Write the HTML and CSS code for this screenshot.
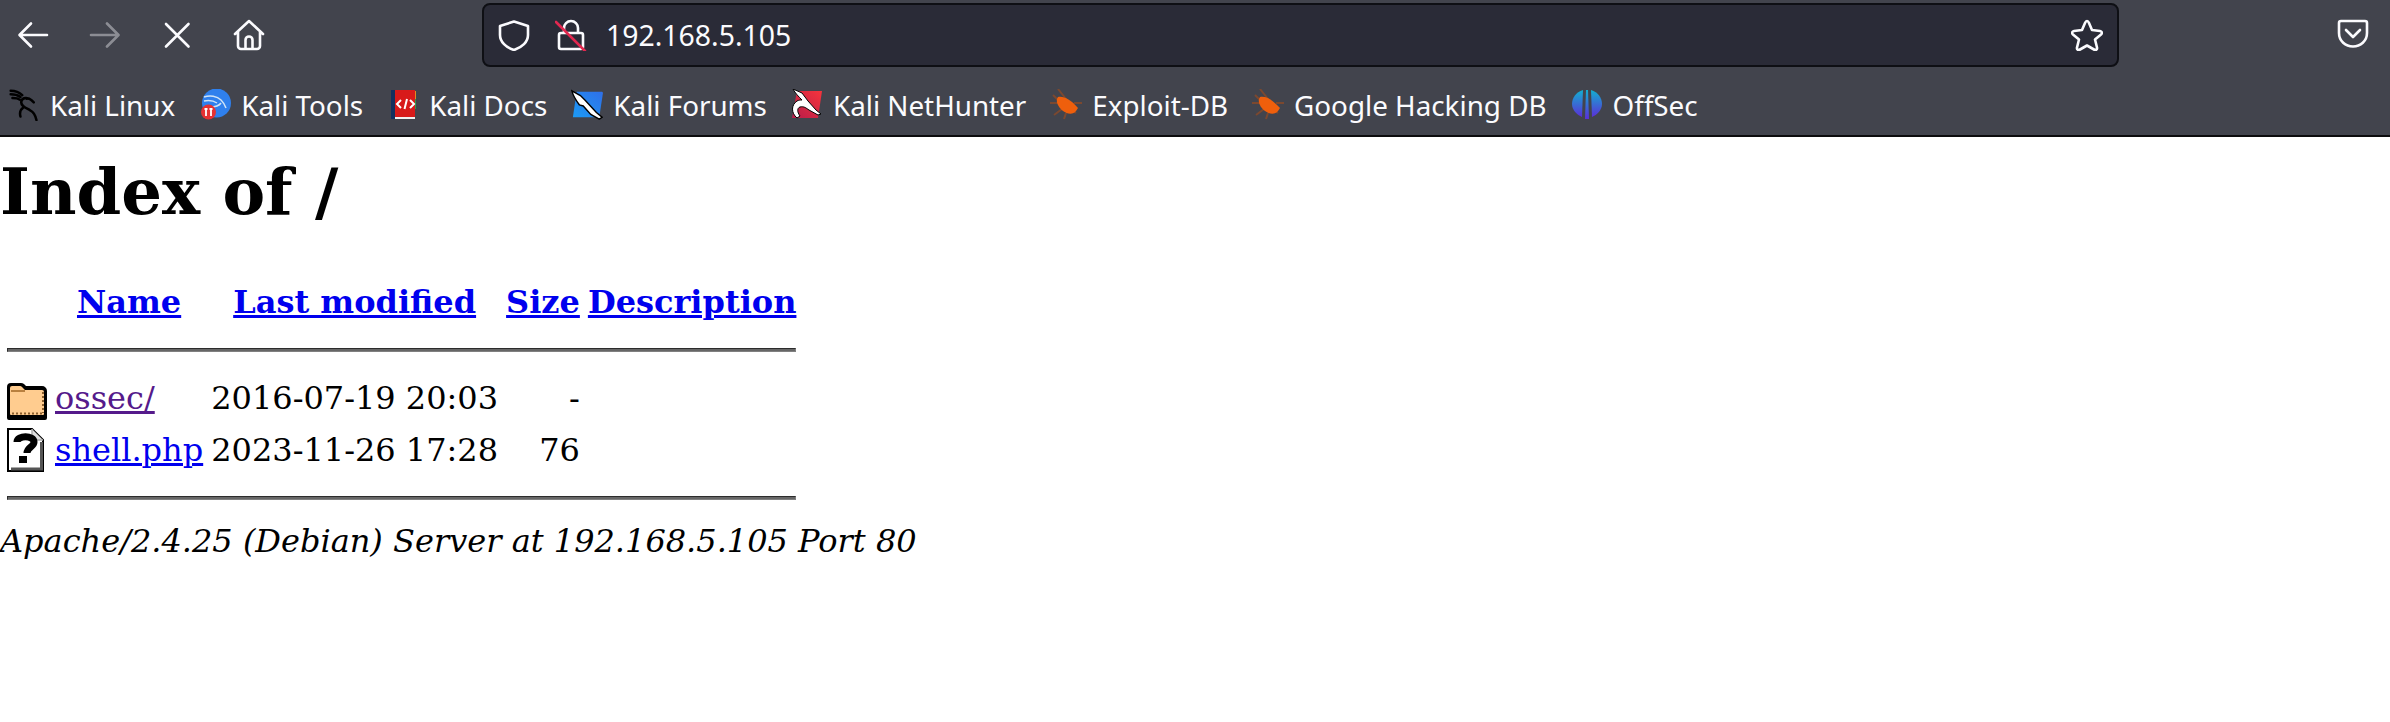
FILE: index.html
```html
<!DOCTYPE html>
<html lang="en">
<head>
    <meta charset="UTF-8">
    <title>Index of /</title>
    <link rel="stylesheet" href="styles.css">
</head>
<body>
    <div class="chrome">
        <div class="toolbar">
            <svg class="tool-icon" viewBox="0 0 32 32"><path d="M30 16H3M14 4.500 2.500 16 14 27.500"/></svg>
            <svg class="tool-icon disabled" viewBox="0 0 32 32"><path d="M2 16h27M18 4.500 29.500 16 18 27.500"/></svg>
            <svg class="tool-icon" viewBox="0 0 32 32"><path d="M5 5l22.500 22.500M27.500 5 5 27.500"/></svg>
            <svg class="tool-icon" viewBox="0 0 32 32"><path d="M2 15 16 2l14 13M5 12.500V27a3 3 0 0 0 3 3h16a3 3 0 0 0 3-3V12.500M12.500 30V21a3.500 3.500 0 0 1 7 0v9"/></svg>
            <div class="urlbar">
                <svg class="url-icon" viewBox="0 0 32 32"><path d="M16 2.500 30 7v9c0 7-6 12.500-14 15C8 28.500 2 23 2 16V7z"/></svg>
                <div class="lock">
                    <svg class="url-icon" viewBox="0 0 32 32"><path d="M9 14V9a7 7 0 0 1 14 0v5M6 14h20a2 2 0 0 1 2 2v12a2 2 0 0 1-2 2H6a2 2 0 0 1-2-2V16a2 2 0 0 1 2-2z"/><path class="slash" d="M1 3l29 29"/></svg>
                </div>
                <span class="url-text">192.168.5.105</span>
                <svg class="url-icon star" viewBox="0 0 32 32"><path d="M16 2c1 0 1.500.8 2 2l3 7 8 1c2 .3 2.500 2 1.300 3.200L24 20.500l2 8c.4 2-1.200 3-3 2l-7-4-7 4c-1.800 1-3.400 0-3-2l2-8-6.300-5.300C.500 14 1 12.300 3 12l8-1 3-7c.5-1.200 1-2 2-2z"/></svg>
            </div>
            <svg class="tool-icon pocket" viewBox="0 0 32 32"><path d="M4 4h24a2 2 0 0 1 2 2v10c0 8-6.500 13.500-14 13.500S2 24 2 16V6a2 2 0 0 1 2-2z"/><path d="M9 13l7 7 7-7"/></svg>
        </div>
        <div class="bookmarks">
            <a class="bookmark">
                <svg class="fav" viewBox="0 0 32 36"><path class="kali-mark" d="M1 2c5 0 10 2 13 5M1 6c4 0 8 1 11 3M3 10c3 0 6 0 8 2M25 13c-4-4-11-4-12 1-1 5 5 7 10 10 4 2 6 6 7 11M19 11c2-1 5 1 8 4M15 21c-3 2-4 6-3 10"/></svg>
                <span>Kali Linux</span>
            </a>
            <a class="bookmark">
                <svg class="fav" viewBox="0 0 32 32"><circle cx="17.500" cy="14" r="14.500" fill="#2f80ed"/><path d="M5 8c6-2 13-1 17 3 2 2 4 5 5 8M5 12c5-1 10 0 13 2M22 14c-2 3-7 4-11 4" fill="none" stroke="#cfe3f7" stroke-width="1.500"/><circle cx="9.500" cy="23" r="7.500" fill="#e53132"/><path d="M5.500 20h3M7 20v7M10.500 20h3M12 20v7" stroke="#fff" stroke-width="1.800" fill="none"/></svg>
                <span>Kali Tools</span>
            </a>
            <a class="bookmark">
                <svg class="fav" viewBox="0 0 32 32"><rect x="4" y="1" width="5" height="29" fill="#14305e"/><rect x="8" y="1" width="20" height="27" fill="#d81a1a"/><rect x="28" y="2" width="1" height="8" fill="#e08a20"/><rect x="28" y="10" width="1" height="10" fill="#2f9a4a"/><rect x="8" y="28" width="20" height="2" fill="#f0f0f0"/><path d="M14 11l-4 4 4 4M23 11l4 4-4 4M20 10l-2.500 10" fill="none" stroke="#fff" stroke-width="2"/></svg>
                <span>Kali Docs</span>
            </a>
            <a class="bookmark">
                <svg class="fav" viewBox="0 0 34 32"><defs><linearGradient id="forum-blue" x1="0" y1="1" x2="1" y2="0"><stop offset="0" stop-color="#1c9bf5"/><stop offset="1" stop-color="#2f6fe8"/></linearGradient></defs><path d="M6 2h27l1 1-4 26H2z" fill="url(#forum-blue)"/><path d="M1 1l9 5 5 5 12 13 6 5-3 2-9-5-8-9-4-1C6 12 2 6 1 1z" fill="#fff" stroke="#000" stroke-width="1.500"/></svg>
                <span>Kali Forums</span>
            </a>
            <a class="bookmark">
                <svg class="fav" viewBox="0 0 32 32"><defs><linearGradient id="hunter-red" x1="0" y1="1" x2="1" y2="0"><stop offset="0" stop-color="#b71c4a"/><stop offset="1" stop-color="#f6343c"/></linearGradient></defs><path d="M6 2h25l-4 27H1z" fill="url(#hunter-red)"/><path d="M2 0l9 4 6 8 8 9 5 4-3 1-9-5c-3-2-5-4-9-3-3 1-3 5 0 9l-3 2C0 24 0 16 6 12c2-1 3-1 5-1C8 8 4 4 2 0z" fill="#fff" stroke="#000" stroke-width="1"/></svg>
                <span>Kali NetHunter</span>
            </a>
            <a class="bookmark">
                <svg class="fav bug-icon" viewBox="0 0 32 32"><path class="bug-legs" d="M8 0l8 10M3 6l8 8M0 14h8M4 26l8-6M14 30l2-6M24 14h8M26 24l-6-4"/><path class="bug" d="M8 8c6-1 12 2 20 11l-2 3c-3 4-9 3-13 0-5-4-8-10-5-14z"/></svg>
                <span>Exploit-DB</span>
            </a>
            <a class="bookmark">
                <svg class="fav bug-icon" viewBox="0 0 32 32"><path class="bug-legs" d="M8 0l8 10M3 6l8 8M0 14h8M4 26l8-6M14 30l2-6M24 14h8M26 24l-6-4"/><path class="bug" d="M8 8c6-1 12 2 20 11l-2 3c-3 4-9 3-13 0-5-4-8-10-5-14z"/></svg>
                <span>Google Hacking DB</span>
            </a>
            <a class="bookmark">
                <svg class="fav" viewBox="0 0 32 32"><defs><linearGradient id="off-grad" x1="0" y1="0" x2="0" y2="1"><stop offset="0" stop-color="#12b0d0"/><stop offset="1" stop-color="#5a2fd8"/></linearGradient></defs><path d="M12 1C5 3 1 9 1 15c0 6 5 11 10 13z" fill="url(#off-grad)"/><path d="M20 1c7 2 11 8 11 14 0 6-5 11-10 13z" fill="url(#off-grad)"/><path d="M15 1h2l1 29h-4z" fill="url(#off-grad)"/></svg>
                <span>OffSec</span>
            </a>
        </div>
    </div>

    <h1>Index of /</h1>
    <table>
        <tr>
            <th><div class="blank-icon"></div></th>
            <th><a href="#">Name</a></th>
            <th><a href="#">Last modified</a></th>
            <th><a href="#">Size</a></th>
            <th><a href="#">Description</a></th>
        </tr>
        <tr><th colspan="5"><hr></th></tr>
        <tr>
            <td>
                <svg class="file-icon" viewBox="0 0 40 44"><path d="M0 11a4 4 0 0 1 4-4h9a5 5 0 0 1 4 1l2 2h16a5 5 0 0 1 5 5v27a2 2 0 0 1-2 2H2a2 2 0 0 1-2-2z" fill="#000"/><path d="M3 12a2 2 0 0 1 2-2h8a3 3 0 0 1 2 1l3 3h17a2 2 0 0 1 2 2v22a1 1 0 0 1-1 1H4a1 1 0 0 1-1-1z" fill="#ffcc8f"/><path d="M4 15h14" stroke="#b9803f" stroke-width="2"/><path d="M5 37.500h31M36 16v21" stroke="#8c5f2e" stroke-width="2" stroke-dasharray="2 2"/></svg>
            </td>
            <td><a class="visited" href="#">ossec/</a></td>
            <td class="right">2016-07-19 20:03</td>
            <td class="right">-</td>
            <td></td>
        </tr>
        <tr>
            <td>
                <svg class="file-icon" viewBox="0 0 40 44"><path d="M1 1h24l11 11v31H1z" fill="#fff" stroke="#000" stroke-width="2"/><path d="M25 1v11h11" fill="#ddd" stroke="#aaa" stroke-width="1.500"/><path d="M34.500 14v27H4" fill="none" stroke="#555" stroke-width="3"/><path d="M10 14c0-7 17-7 17 0 0 5-7 5-7 11" fill="none" stroke="#000" stroke-width="7"/><rect x="12" y="28" width="8" height="7" fill="#000"/></svg>
            </td>
            <td><a href="#">shell.php</a></td>
            <td class="right">2023-11-26 17:28</td>
            <td class="right">76</td>
            <td></td>
        </tr>
        <tr><th colspan="5"><hr></th></tr>
    </table>
    <address>Apache/2.4.25 (Debian) Server at 192.168.5.105 Port 80</address>
</body>
</html>
```

FILE: styles.css
```css
body {
    margin: 0;
    background-color: white;
    color: black;
    font-family: "DejaVu Serif", serif;
    font-size: 32px;
}
.chrome {
    background-color: #42444d;
    border-bottom: 2px solid #0c0c0d;
    font-family: "Noto Sans", sans-serif;
    color: #fbfbfe;
}
.toolbar {
    display: flex;
    align-items: center;
    gap: 40px;
    height: 69px;
    padding: 0 21px 0 17px;
}
.tool-icon, .url-icon {
    width: 32px;
    height: 32px;
    flex: none;
    fill: none;
    stroke: #fbfbfe;
    stroke-width: 2.6;
    stroke-linecap: round;
    stroke-linejoin: round;
}
.tool-icon.disabled {
    opacity: 0.4;
}
.pocket {
    margin-left: 178px;
    margin-top: -4px;
}
.urlbar {
    flex: 1;
    display: flex;
    align-items: center;
    height: 64px;
    margin-left: 177px;
    padding: 0 14px;
    background-color: #2a2b37;
    border: 2px solid #0e0f14;
    border-radius: 8px;
    box-sizing: border-box;
}
.lock {
    margin-left: 25px;
    display: flex;
}
.slash {
    stroke: #e22850;
}
.url-text {
    margin-left: 19px;
    font-size: 28.4px;
    flex: 1;
}
.bookmarks {
    display: flex;
    align-items: center;
    gap: 24px;
    height: 60px;
    padding: 6px 0 0 8px;
    font-size: 27.8px;
}
.bookmark {
    display: flex;
    align-items: center;
    gap: 10px;
    color: inherit;
    text-decoration: none;
}
.fav {
    width: 32px;
    height: 32px;
    flex: none;
}
.kali-mark {
    fill: none;
    stroke: #000;
    stroke-width: 2.8;
    stroke-linecap: round;
}
.bug-icon {
    filter: blur(0.5px);
}
.bug {
    fill: #ef5f0c;
}
.bug-legs {
    fill: none;
    stroke: #8a4a28;
    stroke-width: 2;
    opacity: 0.8;
}
h1 {
    font-size: 64px;
    line-height: 75px;
    margin: 17px 0 45px;
}
table {
    border-spacing: 4px;
    margin-left: 1px;
}
th, td {
    padding: 2px;
    font-size: 32px;
}
td.right {
    text-align: right;
}
a {
    color: #0000ee;
}
a.visited {
    color: #551a8b;
}
hr {
    height: 2px;
    border: 1px inset #808080;
    margin: 16px 0;
    background: #666;
}
.blank-icon {
    width: 40px;
    height: 44px;
}
.file-icon {
    display: block;
    width: 40px;
    height: 44px;
}
address {
    font-style: italic;
}
```
